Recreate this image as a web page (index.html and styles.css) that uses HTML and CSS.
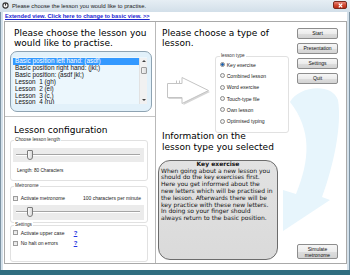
FILE: index.html
```html
<!DOCTYPE html>
<html>
<head>
<meta charset="utf-8">
<link rel="stylesheet" href="styles.css">
</head>
<body>
<div class="win">
  <div class="titlebar">
    <svg class="appicon" width="7" height="7" viewBox="0 0 7 7"><circle cx="3.5" cy="3.5" r="2.6" fill="#f4f4f4" stroke="#333" stroke-width="1.1"/><path d="M3.5 1.2 V3.6" stroke="#333" stroke-width="1.1"/></svg>
    <span class="title">Please choose the lesson you would like to practise.</span>
    <span class="closebtn"><svg width="7" height="5" viewBox="0 0 7 5"><path d="M1.8 0.6 L5.2 4.4 M5.2 0.6 L1.8 4.4" stroke="#fff" stroke-width="1.3"/></svg></span>
  </div>
  <div class="client">
    <a class="viewlink" href="#">Extended view. Click here to change to basic view. &gt;&gt;</a>
    <div class="panel">
      <div class="leftcol">
        <section class="choose">
          <h2 class="head">Please choose the lesson you<br>would like to practise.</h2>
          <div class="listwrap">
            <div class="listbox">
              <ul class="items">
                <li class="sel">Basic position left hand: (asdf)</li>
                <li>Basic position right hand: (jkl;)</li>
                <li>Basic position: (asdf jkl;)</li>
                <li>Lesson  1 (gh)</li>
                <li>Lesson  2 (ei)</li>
                <li>Lesson  3 (c,)</li>
                <li>Lesson  4 (ru)</li>
              </ul>
              <div class="vscroll">
                <span class="arr up"></span>
                <span class="sthumb"></span>
                <span class="arr down"></span>
              </div>
            </div>
          </div>
        </section>
        <section class="config">
          <h2 class="head">Lesson configuration</h2>
          <div class="group g-length">
            <div class="legend">Choose lesson length</div>
            <div class="sliderband"><div class="track"><span class="knob"></span></div></div>
            <div class="lenlabel">Length: 80 Characters</div>
          </div>
          <div class="group g-metro">
            <div class="legend">Metronome</div>
            <div class="checkrow"><span class="cb"></span><span class="cl">Activate metronome</span><span class="cpm">100 characters per minute</span></div>
            <div class="sliderband tall"><div class="track"><span class="knob"></span></div></div>
          </div>
          <div class="group g-settings">
            <div class="legend">Settings</div>
            <div class="checkrow"><span class="cb"></span><span class="cl fixed">Activate upper case</span><a class="help" href="#">?</a></div>
            <div class="checkrow second"><span class="cb"></span><span class="cl fixed">No halt on errors</span><a class="help" href="#">?</a></div>
          </div>
        </section>
      </div>
      <div class="rightcol">
        <svg class="swoosh" width="190" height="241" viewBox="156 22 190 241"><path d="M290 102 C298 86 332 82 338 100 C342 125 334 165 322 197 L330 200 L283 231 L283 190 L296 194 C310 160 312 130 290 102 Z" fill="#e7f5fc"/></svg>
        <div class="rmain">
          <h2 class="head">Please choose a type of<br>lesson.</h2>
          <div class="typerow">
            <svg class="bigarrow" width="44" height="29" viewBox="0 0 44 29">
              <path d="M1.5 8 H16.5 V2 L43 15 L16.5 28 V22 H1.5 Z" fill="#d6d6d6"/>
              <path d="M0.5 6.5 H15 V0.5 L41.5 13.5 L15 26.5 V20.5 H0.5 Z" fill="#fff" stroke="#c4c4c4" stroke-width="1"/>
              <path d="M9.5 6.5 V3.5 M12.5 6.5 V3.5" stroke="#c4c4c4" stroke-width="1"/>
            </svg>
            <div class="group g-type">
              <div class="legend">lesson type</div>
              <ul class="radios">
                <li><span class="rb on"></span>Key exercise</li>
                <li><span class="rb"></span>Combined lesson</li>
                <li><span class="rb"></span>Word exercise</li>
                <li><span class="rb"></span>Touch-type file</li>
                <li><span class="rb"></span>Own lesson</li>
                <li><span class="rb"></span>Optimised typing</li>
              </ul>
            </div>
          </div>
          <h2 class="head info-head">Information on the<br>lesson type you selected</h2>
          <div class="infobox">
            <div class="info-title">Key exercise</div>
            <p class="info-text">When going about a new lesson you<br>should do the key exercises first.<br>Here you get informed about the<br>new letters which will be practised in<br>the lesson. Afterwards there will be<br>key practice with these new letters.<br>In doing so your finger should<br>always return to the basic position.</p>
          </div>
        </div>
        <div class="buttons">
          <button class="btn">Start</button>
          <button class="btn">Presentation</button>
          <button class="btn">Settings</button>
          <button class="btn">Quit</button>
          <button class="btn sim">Simulate<br>metronome</button>
        </div>
      </div>
    </div>
  </div>
</div>
</body>
</html>
```

FILE: styles.css
```css
* { box-sizing: border-box; margin: 0; padding: 0; }
html, body { width: 350px; height: 275px; overflow: hidden; }
body { font-family: "Liberation Sans", Arial, sans-serif; color: #000; background: #2f6e80; }

.win {
  width: 350px; height: 275px;
  display: flex; flex-direction: column;
  padding: 0 3px;
  background: linear-gradient(90deg, #7d93a3 0, #7d93a3 1px, #d3e0ea 1px, #d3e0ea 349px, #7d93a3 349px);
  border-bottom: 5px solid #2f6e80;
}

.titlebar {
  height: 12px; margin: 0 -3px;
  display: flex; align-items: center;
  background: linear-gradient(#e6eef4, #d2dfe9);
  padding-left: 2px;
}
.appicon { display: block; margin-top: -1px; }
.title { font-size: 5.8px; line-height: 12px; margin-left: 3px; color: #1b1b1b; white-space: nowrap; }
.closebtn {
  margin-left: auto; margin-right: 3px; margin-top: -2px;
  width: 14px; height: 8px;
  display: flex; align-items: center; justify-content: center;
  background: linear-gradient(#e9877a, #d24a33 50%, #b92c16);
  border: 1px solid #7a2a1d; border-radius: 2px;
}
.closebtn svg { display: block; }

.client { height: 258px; background: #fff; display: flex; flex-direction: column; }
.viewlink {
  display: block; height: 9px; line-height: 9px;
  padding-left: 2px;
  font-size: 5.7px; font-weight: bold; color: #1c25d0;
  text-decoration: underline; white-space: nowrap;
}
.panel {
  height: 243px; margin-left: 1px;
  border: 1px solid #a9a9a9;
  display: flex;
}

.head {
  font-family: "DejaVu Sans", Verdana, sans-serif;
  font-weight: normal; font-size: 9px; line-height: 10.5px;
  white-space: nowrap;
}

/* left column */
.leftcol { width: 151px; border-right: 1px solid #b9b9b9; display: flex; flex-direction: column; }
.choose { height: 95px; border-bottom: 1px solid #c4c4c4; padding-top: 5.6px; }
.choose .head { margin-left: 9px; }
.listwrap {
  margin: 2.4px 0 0 5px;
  width: 142px; height: 61px;
  border: 1px solid #8ea3b2; border-radius: 7px;
  background: #e2f1fa;
  padding: 5px 3px 0 2px;
}
.listbox { width: 134px; height: 47px; display: flex; background: #ecf7fd; }
.items {
  list-style: none; width: 126px; height: 47px; overflow: hidden;
  padding-top: 1px;
  font-size: 6.4px; line-height: 6.9px;
}
.items li { padding-left: 2px; white-space: pre; color: #111; }
.items li.sel { background: #3399ff; color: #fff; }
.vscroll {
  width: 8px; height: 46px; margin-top: 1px;
  background: #f1f1f1; border-left: 1px solid #e2e2e2;
  display: flex; flex-direction: column; align-items: center;
}
.arr { width: 0; height: 0; border-left: 2px solid transparent; border-right: 2px solid transparent; }
.arr.up { border-bottom: 2px solid #404040; margin-top: 2px; }
.arr.down { border-top: 2px solid #404040; margin-top: auto; margin-bottom: 3px; }
.sthumb { width: 6px; height: 7px; margin-top: 5px; border: 1px solid #9a9a9a; border-radius: 1px; background: linear-gradient(90deg, #f4f4f4, #dcdcdc); }

.config { flex: 1; padding-top: 7.6px; }
.config .head { margin-left: 9px; }

.group { border: 1px solid #e1e1e1; border-radius: 3px; }
.legend {
  width: max-content;
  font-size: 4.7px; line-height: 6px;
  margin: -4px 0 0 1px; padding: 0 1px;
  background: #fff; color: #333;
}
.config .group { margin-left: 5px; width: 138px; padding: 0 3px 0 2px; }
.g-length { margin-top: 4.9px; padding-bottom: 6px !important; }
.g-metro { margin-top: 5px; padding-bottom: 2px !important; }
.g-settings { margin-top: 2px; padding-bottom: 14.5px !important; }

.sliderband { margin-top: 5px; height: 14px; background: #ebebeb; display: flex; align-items: center; padding: 0 4px 0 3px; }
.sliderband.tall { margin-top: 3.5px; height: 15px; }
.track { position: relative; flex: 1; height: 2px; border-top: 1px solid #a5a5a5; border-bottom: 1px solid #fff; }
.knob {
  position: absolute; left: 11px; top: -5px;
  width: 6px; height: 10px;
  border: 1px solid #7b7b7b; border-radius: 1px 1px 3px 3px;
  background: linear-gradient(90deg, #fbfbfb, #d9d9d9);
}
.lenlabel { margin: 6px 0 0 4px; font-size: 4.7px; line-height: 6px; color: #222; }

.checkrow { display: flex; align-items: center; height: 6px; margin-top: 6.5px; font-size: 5px; line-height: 6px; color: #222; }
.g-settings .checkrow { margin-top: 2px; }
.g-settings .checkrow.second { margin-top: 4.5px; }
.cb { width: 5px; height: 5px; border: 1px solid #9c9c9c; background: linear-gradient(#e3e3e3, #f3f3f3); margin-left: 0; flex: none; }
.cl { margin-left: 2.7px; white-space: nowrap; }
.cl.fixed { width: 53px; }
.cpm { margin-left: auto; margin-right: 3px; white-space: nowrap; }
.help { font-size: 6px; font-weight: bold; color: #2234e0; text-decoration: underline; }

/* right column */
.rightcol { flex: 1; display: flex; position: relative; }
.swoosh { position: absolute; left: 0; top: 0; z-index: 0; }
.rmain { flex: 1; position: relative; z-index: 1; padding: 5.6px 0 0 2px; }
.rmain > .head { margin-left: 4px; }
.typerow { display: flex; align-items: flex-start; }
.bigarrow { display: block; margin: 28px 0 0 9px; }
.g-type { margin: 7.4px 4px 0 auto; width: 74px; padding: 0 0 5px 4px; background: rgba(255,255,255,0.6); }
.g-type .legend { margin-left: 0; }
.radios { list-style: none; font-size: 5.1px; color: #222; }
.radios li { height: 11.3px; display: flex; align-items: center; white-space: nowrap; }
.rb {
  width: 5px; height: 5px; border-radius: 50%; flex: none;
  border: 1px solid #8c8c8c; background: #f0f0f0; margin-right: 1.7px;
}
.rb.on { background: radial-gradient(circle, #1d5fa9 0, #2b6fbf 1.2px, #f0f0f0 1.6px); }

.info-head { margin-top: -1.4px; }
.infobox {
  margin-top: 7.4px; width: 120px; height: 100px;
  border: 1px solid #6c6c6c; border-radius: 12px;
  background: linear-gradient(#e2e2e2, #dadada);
  padding: 0 2px 0 2px;
  font-family: "DejaVu Sans", Verdana, sans-serif;
  font-size: 6px; line-height: 6.8px; color: #111;
}
.info-title { text-align: center; font-weight: bold; }
.info-text { white-space: nowrap; }

.buttons { width: 41px; margin: 6px 8px 4px 4px; display: flex; flex-direction: column; gap: 4px; position: relative; z-index: 1; }
.btn {
  height: 11px;
  font-family: "Liberation Sans", Arial, sans-serif; font-size: 5px; line-height: 9px; color: #111;
  border: 1px solid #8d8d8d; border-radius: 2px;
  background: linear-gradient(#f6f6f6, #ececec 50%, #dedede 51%, #d3d3d3);
}
.btn.sim { margin-top: auto; height: 15px; line-height: 6px; }
```
